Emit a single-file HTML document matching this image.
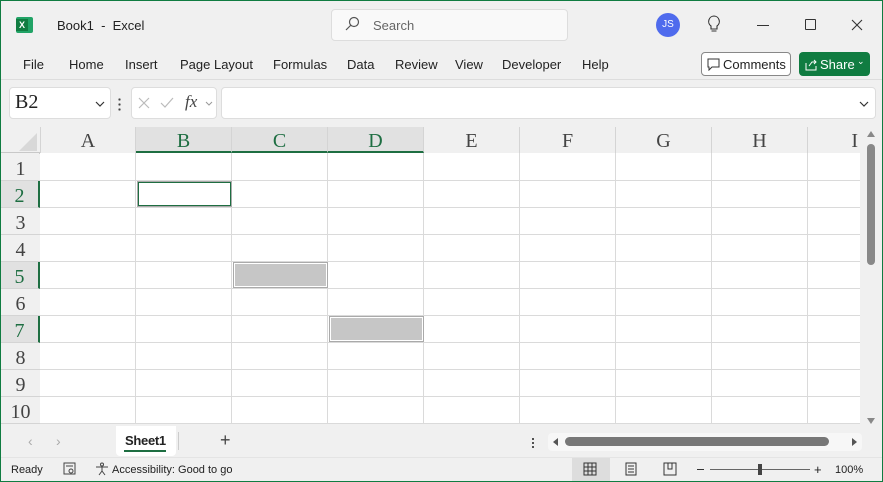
<!DOCTYPE html>
<html><head><meta charset="utf-8"><style>
*{margin:0;padding:0;box-sizing:border-box}
body{width:883px;height:482px;overflow:hidden;background:#f0f0f0;font-family:"Liberation Sans",sans-serif;font-size:13px;color:#222;position:relative}
.a{position:absolute}
.win{left:0;top:0;width:883px;height:482px;border:1px solid #107c41;pointer-events:none;z-index:10}
.menu span{position:absolute;top:57px;font-size:13px;color:#222}
.hdr{font-family:"Liberation Serif",serif;font-size:20px;color:#444;text-align:center}
.col{top:127px;height:26px;width:96px;line-height:28px;border-right:1px solid #d4d4d4;background:#f0f0f0}
.row{left:1px;width:39px;height:27px;line-height:31px;border-bottom:1px solid #d4d4d4;background:#f0f0f0}
.sel{background:#e1e1e1;color:#1e6e42}
</style></head><body>
<div class="a win"></div>
<!-- title bar -->
<div class="a" style="left:16px;top:17px;width:17px;height:16px;background:#21a366;border-radius:2px"></div>
<div class="a" style="left:16px;top:19px;width:12px;height:12px;background:#107c41;color:#fff;font-size:9px;font-weight:bold;text-align:center;line-height:12px">X</div>
<div class="a" style="left:57px;top:18px;font-size:13px">Book1&nbsp; - &nbsp;Excel</div>
<div class="a" style="left:331px;top:9px;width:237px;height:32px;background:#f9f9f9;border:1px solid #ddd;border-radius:4px"></div>
<svg class="a" style="left:344px;top:16px" width="16" height="16"><circle cx="10" cy="6" r="4.5" fill="none" stroke="#555" stroke-width="1.2"/><line x1="7" y1="9" x2="2" y2="14" stroke="#555" stroke-width="1.2"/></svg>
<div class="a" style="left:373px;top:18px;color:#666">Search</div>
<div class="a" style="left:656px;top:13px;width:24px;height:24px;border-radius:50%;background:#4f6bed;color:#fff;font-size:10px;text-align:center;line-height:24px">JS</div>
<svg class="a" style="left:706px;top:15px" width="16" height="20"><path d="M8 1a5.5 5.5 0 0 0-3 10v3h6v-3a5.5 5.5 0 0 0-3-10z M5.5 16h5" fill="none" stroke="#333" stroke-width="1.1"/></svg>
<div class="a" style="left:757px;top:25px;width:12px;height:1px;background:#333"></div>
<div class="a" style="left:805px;top:19px;width:11px;height:11px;border:1px solid #333;border-radius:1px"></div>
<svg class="a" style="left:851px;top:19px" width="12" height="12"><path d="M1 1L11 11M11 1L1 11" stroke="#333" stroke-width="1.1"/></svg>
<!-- menu -->
<div class="menu"><span style="left:23px">File</span><span style="left:69px">Home</span><span style="left:125px">Insert</span><span style="left:180px">Page Layout</span><span style="left:273px">Formulas</span><span style="left:347px">Data</span><span style="left:395px">Review</span><span style="left:455px">View</span><span style="left:502px">Developer</span><span style="left:582px">Help</span></div>
<div class="a" style="left:701px;top:52px;width:90px;height:24px;border:1px solid #888;border-radius:4px;background:#fff"></div>
<svg class="a" style="left:707px;top:58px" width="14" height="13"><path d="M1 1h11v8H5l-3 3V9H1z" fill="none" stroke="#333"/></svg>
<div class="a" style="left:723px;top:57px">Comments</div>
<div class="a" style="left:799px;top:52px;width:71px;height:24px;background:#107c41;border-radius:4px"></div>
<svg class="a" style="left:804px;top:57px" width="14" height="14"><path d="M2 6v7h10V9M5 9l3-4h4M10 3l2 2-2 2" fill="none" stroke="#fff"/></svg>
<div class="a" style="left:820px;top:57px;color:#fff">Share</div>
<div class="a" style="left:857px;top:56px;color:#fff;font-size:9px">⌄</div>
<div class="a" style="left:1px;top:79px;width:881px;height:1px;background:#ddd"></div>
<!-- formula bar -->
<div class="a" style="left:9px;top:87px;width:102px;height:32px;background:#fff;border:1px solid #ddd;border-radius:4px"></div>
<div class="a" style="left:15px;top:91px;font-family:'Liberation Serif',serif;font-size:20px">B2</div>
<svg class="a" style="left:94px;top:100px" width="12" height="8"><path d="M2 2l4 4 4-4" fill="none" stroke="#333" stroke-width="1.2"/></svg>
<div class="a" style="left:118px;top:97px;width:3px;height:14px;background:radial-gradient(circle,#444 1px,transparent 1.3px) 0 0/3px 5px"></div>
<div class="a" style="left:131px;top:87px;width:86px;height:32px;background:#fff;border:1px solid #ddd;border-radius:4px"></div>
<svg class="a" style="left:137px;top:96px" width="80" height="14"><path d="M2 2l10 10M12 2L2 12M24 7l4 4 8-9" fill="none" stroke="#bbb" stroke-width="1.2"/><path d="M69 6l3 3 3-3" fill="none" stroke="#999"/></svg>
<div class="a" style="left:185px;top:92px;font-family:'Liberation Serif',serif;font-style:italic;font-size:17px;color:#444">fx</div>
<div class="a" style="left:221px;top:87px;width:655px;height:32px;background:#fff;border:1px solid #ddd;border-radius:4px"></div>
<svg class="a" style="left:858px;top:100px" width="12" height="8"><path d="M2 2l4 4 4-4" fill="none" stroke="#333" stroke-width="1.2"/></svg>
<!-- grid -->
<div class="a" style="left:40px;top:153px;width:820px;height:272px;background:repeating-linear-gradient(90deg,transparent 0 95px,#dadada 95px 96px),#fff"></div>
<div class="a" style="left:40px;top:154px;width:820px;height:271px;background:repeating-linear-gradient(180deg,transparent 0 26px,#dadada 26px 27px)"></div>
<div class="a" style="left:1px;top:127px;width:859px;height:26px;background:#f0f0f0;border-bottom:1px solid #c8c8c8"></div>
<svg class="a" style="left:18px;top:132px" width="20" height="20"><path d="M19 1L19 19L1 19z" fill="#d8d8d8"/></svg>
<div class="a hdr col" style="left:40px;border-left:1px solid #d4d4d4">A</div>
<div class="a hdr col sel" style="left:136px;border-bottom:2px solid #1e6e42">B</div>
<div class="a hdr col sel" style="left:232px;border-bottom:2px solid #1e6e42">C</div>
<div class="a hdr col sel" style="left:328px;border-bottom:2px solid #1e6e42">D</div>
<div class="a hdr col" style="left:424px">E</div>
<div class="a hdr col" style="left:520px">F</div>
<div class="a hdr col" style="left:616px">G</div>
<div class="a hdr col" style="left:712px">H</div>
<div class="a hdr col" style="left:808px;width:52px;text-align:right;padding-right:2px;border:none">I</div>
<div class="a" style="left:1px;top:153px;width:39px;height:272px;background:#f0f0f0;border-right:1px solid #c8c8c8"></div>
<div class="a hdr row" style="top:154px">1</div>
<div class="a hdr row sel" style="top:181px;border-right:2px solid #1e6e42">2</div>
<div class="a hdr row" style="top:208px">3</div>
<div class="a hdr row" style="top:235px">4</div>
<div class="a hdr row sel" style="top:262px;border-right:2px solid #1e6e42">5</div>
<div class="a hdr row" style="top:289px">6</div>
<div class="a hdr row sel" style="top:316px;border-right:2px solid #1e6e42">7</div>
<div class="a hdr row" style="top:343px">8</div>
<div class="a hdr row" style="top:370px">9</div>
<div class="a hdr row" style="top:397px">10</div>
<div class="a" style="left:137px;top:181px;width:95px;height:26px;border:1px solid #aaa"></div>
<div class="a" style="left:138px;top:182px;width:93px;height:24px;border:1px solid #1e6e42"></div>
<div class="a" style="left:233px;top:262px;width:95px;height:26px;border:1px solid #aaa;background:#c6c6c6;box-shadow:inset 0 0 0 1px #fff"></div>
<div class="a" style="left:329px;top:316px;width:95px;height:26px;border:1px solid #aaa;background:#c6c6c6;box-shadow:inset 0 0 0 1px #fff"></div>
<!-- vertical scroll -->
<div class="a" style="left:860px;top:127px;width:22px;height:298px;background:#f0f0f0"></div>
<div class="a" style="left:867px;top:131px;width:0;height:0;border:4px solid transparent;border-bottom:6px solid #888;border-top:none"></div>
<div class="a" style="left:867px;top:144px;width:8px;height:121px;background:#888;border-radius:4px"></div>
<div class="a" style="left:867px;top:418px;width:0;height:0;border:4px solid transparent;border-top:6px solid #888;border-bottom:none"></div>
<!-- tabs -->
<div class="a" style="left:1px;top:424px;width:881px;height:33px;background:#f0f0f0"></div>
<div class="a" style="left:28px;top:433px;color:#aaa;font-size:14px">‹&nbsp;&nbsp;&nbsp;&nbsp;&nbsp;&nbsp;›</div>
<div class="a" style="left:116px;top:426px;width:60px;height:30px;background:#fff;border-radius:0 0 4px 4px"></div>
<div class="a" style="left:125px;top:433px;font-weight:bold;font-size:13px;color:#222;letter-spacing:-0.3px">Sheet1</div>
<div class="a" style="left:124px;top:450px;width:42px;height:2px;background:#1e6e42"></div>
<div class="a" style="left:178px;top:432px;width:1px;height:18px;background:#ccc"></div>
<div class="a" style="left:220px;top:430px;font-size:18px;color:#444">+</div>
<div class="a" style="left:532px;top:437px;width:2px;height:12px;background:radial-gradient(circle,#444 1px,transparent 1.2px) 0 0/2px 4px"></div>
<div class="a" style="left:548px;top:433px;width:314px;height:18px;background:#f7f7f7;border-radius:4px"></div>
<div class="a" style="left:553px;top:438px;width:0;height:0;border:4px solid transparent;border-right:5px solid #555;border-left:none"></div>
<div class="a" style="left:565px;top:437px;width:264px;height:9px;background:#777;border-radius:5px"></div>
<div class="a" style="left:852px;top:438px;width:0;height:0;border:4px solid transparent;border-left:5px solid #555;border-right:none"></div>
<!-- status -->
<div class="a" style="left:1px;top:457px;width:881px;height:1px;background:#e4e4e4"></div>
<div class="a" style="left:11px;top:464px;font-size:11px">Ready</div>
<svg class="a" style="left:63px;top:462px" width="14" height="14"><rect x="1" y="1" width="11" height="11" fill="none" stroke="#444"/><line x1="3" y1="4" x2="10" y2="4" stroke="#444"/><circle cx="8" cy="9" r="2" fill="none" stroke="#444"/></svg>
<svg class="a" style="left:95px;top:462px" width="14" height="14"><circle cx="7" cy="2.5" r="1.5" fill="none" stroke="#444"/><path d="M1 5h12M7 5v4l-3 4M7 9l3 4" fill="none" stroke="#444"/></svg>
<div class="a" style="left:112px;top:464px;font-size:11px">Accessibility: Good to go</div>
<div class="a" style="left:572px;top:458px;width:38px;height:24px;background:#ddd"></div>
<svg class="a" style="left:583px;top:462px" width="14" height="14"><path d="M1 1h12v12H1zM1 5h12M1 9h12M5 1v12M9 1v12" fill="none" stroke="#333"/></svg>
<svg class="a" style="left:624px;top:462px" width="14" height="14"><path d="M2 1h10v12H2zM4 4h6M4 7h6M4 10h6" fill="none" stroke="#333"/></svg>
<svg class="a" style="left:663px;top:462px" width="14" height="14"><path d="M1 1h12v12H1zM5 1v6h4V1" fill="none" stroke="#333"/></svg>
<div class="a" style="left:697px;top:469px;width:7px;height:1px;background:#333"></div>
<div class="a" style="left:710px;top:469px;width:100px;height:1px;background:#666"></div>
<div class="a" style="left:758px;top:464px;width:4px;height:11px;background:#444"></div>
<div class="a" style="left:814px;top:462px;font-size:13px">+</div>
<div class="a" style="left:835px;top:464px;font-size:11px">100%</div>
</body></html>
